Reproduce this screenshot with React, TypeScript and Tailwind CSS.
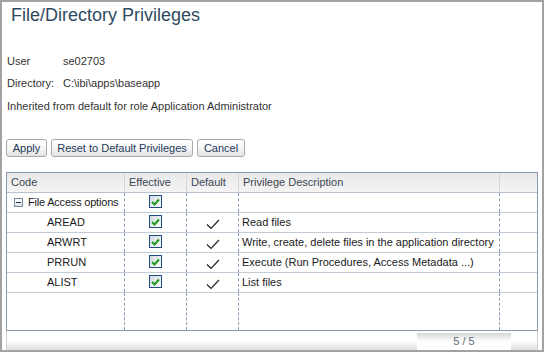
import React from 'react';

type Row = {
  code: string;
  child?: boolean;
  def?: boolean;
  desc?: string;
};

const rows: Row[] = [
  { code: 'File Access options' },
  { code: 'AREAD', child: true, def: true, desc: 'Read files' },
  { code: 'ARWRT', child: true, def: true, desc: 'Write, create, delete files in the application directory' },
  { code: 'PRRUN', child: true, def: true, desc: 'Execute (Run Procedures, Access Metadata ...)' },
  { code: 'ALIST', child: true, def: true, desc: 'List files' },
];

const cols = 'grid grid-cols-[118px_62px_52px_261px_38px]';
const dash = 'border-r border-dashed border-[#8d9db6]';

const CheckBox = () => (
  <div className="mt-[2px] w-[13px] h-[13px] border border-[#1d4d85] bg-gradient-to-br from-[#d4d8dc] to-white flex items-center justify-center">
    <svg width="9" height="8" viewBox="0 0 9 8">
      <path d="M1 4 L3.5 6.5 L8 1.5" fill="none" stroke="#1f9a1f" strokeWidth="2" />
    </svg>
  </div>
);

const Tick = () => (
  <svg className="mt-[6px]" width="14" height="11" viewBox="0 0 14 11">
    <path d="M1 5.5 L5 9.5 L13 1" fill="none" stroke="#222" strokeWidth="1.2" />
  </svg>
);

const MinusBox = () => (
  <div className="w-[9px] h-[9px] border border-[#7b8a99] bg-gradient-to-b from-white to-[#dfe3e8] flex items-center justify-center">
    <div className="w-[5px] h-[1px] bg-[#1d2f45]" />
  </div>
);

const Button = ({ label, w }: { label: string; w: string }) => (
  <button className={`${w} h-[18px] rounded-[3px] border border-[#a9a9a9] bg-gradient-to-b from-white via-[#f7f7f7] to-[#e2e2e2] text-[#1f3a5c] text-[11px] leading-none flex items-center justify-center`}>
    {label}
  </button>
);

export default function App() {
  return (
    <div className="w-[545px] h-[355px] bg-white">
      <div className="w-[544px] h-[352px] border-2 border-[#a2a2a2] flex flex-col font-['Liberation_Sans',sans-serif] text-[11px] text-[#333]">
        <h1 className="pl-[9px] pt-[3px] h-[48px] text-[18px] leading-[20px] text-[#2f4a60]">File/Directory Privileges</h1>

        <div className="pl-[5px] flex flex-col">
          <div className="h-[22px] flex items-center">
            <span className="w-[56px]">User</span>
            <span>se02703</span>
          </div>
          <div className="h-[23px] flex items-center">
            <span className="w-[56px]">Directory:</span>
            <span>C:\ibi\apps\baseapp</span>
          </div>
          <div className="h-[22px] flex items-center">Inherited from default for role Application Administrator</div>
        </div>

        <div className="mt-[22px] pl-[4px] flex gap-[4px]">
          <Button label="Apply" w="w-[41px]" />
          <Button label="Reset to Default Privileges" w="w-[142px]" />
          <Button label="Cancel" w="w-[48px]" />
        </div>

        <div className="mt-[15px] mx-[4px] h-[159px] border border-[#8a9ab2] flex flex-col text-[#1a1a1a]">
          <div className={`${cols} h-[20px] border-b border-[#b9c3d0] bg-gradient-to-b from-[#e9e9e9] to-[#f4f4f4] text-[#3b4654]`}>
            <div className="pl-[4px] flex items-center border-r border-[#d6d6d6]">Code</div>
            <div className="pl-[4px] flex items-center border-r border-[#d6d6d6]">Effective</div>
            <div className="pl-[4px] flex items-center border-r border-[#d6d6d6]">Default</div>
            <div className="pl-[4px] flex items-center border-r border-[#d6d6d6]">Privilege Description</div>
            <div />
          </div>

          {rows.map((r) => (
            <div key={r.code} className={`${cols} h-[20px] border-b border-[#c3cbd6]`}>
              <div className={`${dash} flex items-center ${r.child ? 'pl-[40px]' : 'pl-[7px] gap-[5px]'}`}>
                {!r.child && <MinusBox />}
                <span className={r.child ? '' : 'tracking-[-0.2px]'}>{r.code}</span>
              </div>
              <div className={`${dash} flex justify-center`}>
                <CheckBox />
              </div>
              <div className={`${dash} flex justify-center`}>{r.def && <Tick />}</div>
              <div className={`${dash} pl-[3px] flex items-center whitespace-nowrap`}>{r.desc}</div>
              <div />
            </div>
          ))}

          <div className={`${cols} flex-1`}>
            <div className={dash} />
            <div className={dash} />
            <div className={dash} />
            <div className={dash} />
            <div />
          </div>
        </div>

        <div className="mx-[4px] h-[19px] border-x border-[#d2d2d2] bg-gradient-to-b from-white via-white to-[#dedede] flex justify-end pr-[26px]">
          <div className="mt-[2px] w-[94px] h-[17px] bg-gradient-to-b from-[#d6d6d6] via-white to-white flex items-center justify-center text-[11px] text-[#5d6b78]">
            5 / 5
          </div>
        </div>
      </div>
    </div>
  );
}
